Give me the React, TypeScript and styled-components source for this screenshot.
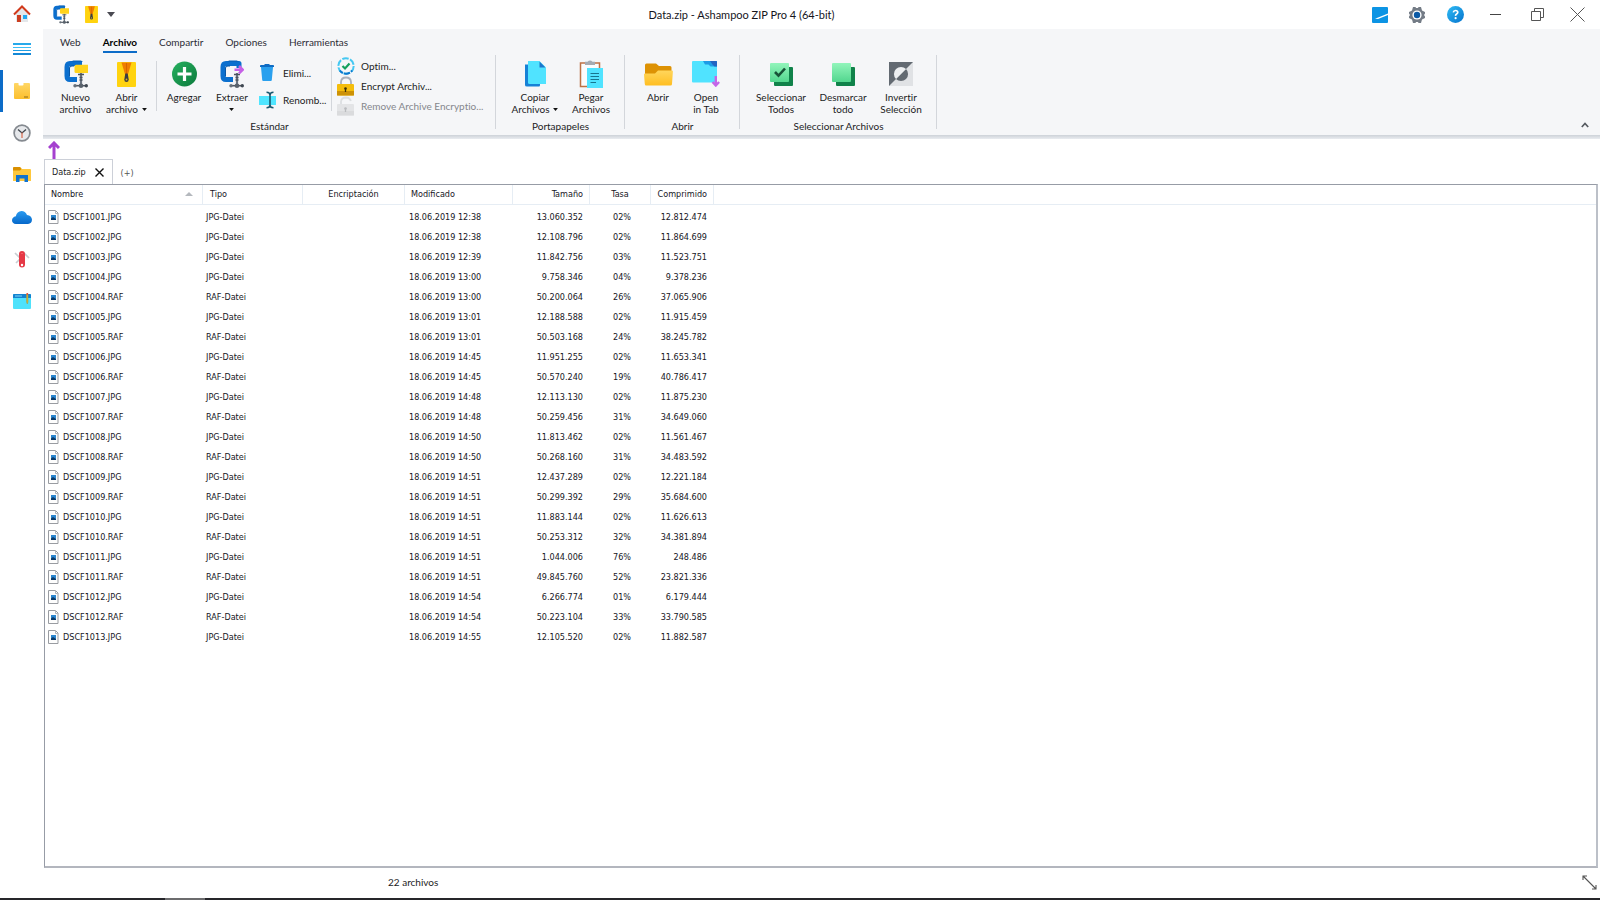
import React from 'react';
import styled, { createGlobalStyle } from 'styled-components';

const uiFont = 'Lato, "Open Sans", sans-serif';
const listFont = '"DejaVu Sans Condensed", "DejaVu Sans", sans-serif';

const GlobalStyle = createGlobalStyle`
  *, *::before, *::after { box-sizing: border-box; }
  body { margin: 0; background: #fff; }
  button { font: inherit; color: inherit; background: none; border: 0; padding: 0; margin: 0; }
  svg { display: block; flex: none; }
`;

const Window = styled.div`
  display: flex;
  flex-direction: column;
  min-height: 100vh;
  background: #fff;
  color: #1c1c24;
  font: 10px/12px ${uiFont};
  font-variant-ligatures: none;
`;

const Body = styled.div`
  flex: 1;
  display: flex;
`;

const Sidebar = styled.nav`
  flex: none;
  width: 43px;
  display: flex;
  flex-direction: column;
`;

const SideButton = styled.button<{ $top?: boolean; $active?: boolean }>`
  height: ${p => (p.$top ? 28 : 42)}px;
  display: flex;
  align-items: center;
  justify-content: center;
  padding-right: 3px;
  border-left: 3px solid ${p => (p.$active ? '#0c6cc8' : 'transparent')};
  background-clip: padding-box;
`;

const Main = styled.main`
  flex: 1;
  min-width: 0;
  display: flex;
  flex-direction: column;
`;

const TitleBar = styled.header`
  height: 29px;
  display: flex;
  align-items: center;
`;

const QuickTools = styled.div`
  display: flex;
  align-items: center;
  gap: 16px;
  padding-left: 10px;
`;

const CaretButton = styled.button`
  margin-left: -7px;
`;

const Title = styled.h1`
  flex: 1;
  margin: 0;
  padding-left: 2px;
  text-align: center;
  font-size: 11px;
  line-height: 14px;
  font-weight: 400;
  color: #15151c;
`;

const WindowControls = styled.div`
  display: grid;
  grid-template-columns: 28px 46px 30px 50px 34px 46px;
  justify-items: center;
  align-items: center;
`;

const Ribbon = styled.section`
  height: 106px;
  background: #f5f6f8;
  display: flex;
  flex-direction: column;
`;

const RibbonEdge = styled.div`
  height: 4px;
  background: linear-gradient(#cdd2d8, #e9ecf0);
`;

const Tabs = styled.div`
  height: 25px;
  display: flex;
  gap: 22px;
  padding-left: 17px;
`;

const Tab = styled.button<{ $active?: boolean }>`
  height: 24px;
  padding-top: 3px;
  font-weight: ${p => (p.$active ? 700 : 400)};
  color: ${p => (p.$active ? '#000' : '#2c2c36')};
  border-bottom: 2px solid ${p => (p.$active ? '#0c6cc8' : 'transparent')};
`;

const Groups = styled.div`
  flex: 1;
  display: flex;
  align-items: flex-start;
  padding-top: 1px;
`;

const GroupBox = styled.section`
  height: 80px;
  display: flex;
  flex-direction: column;
  background: linear-gradient(#d3d6db, #d3d6db) right top / 1px 74px no-repeat;
`;

const Tools = styled.div<{ $pad: string }>`
  height: 65px;
  padding: ${p => p.$pad};
  display: flex;
`;

const GroupLabel = styled.h2`
  margin: 0;
  text-align: center;
  font-size: 10px;
  line-height: 12px;
  font-weight: 400;
`;

const BigButton = styled.button<{ $width: number }>`
  width: ${p => p.$width}px;
  padding-top: 5px;
  display: flex;
  flex-direction: column;
  align-items: center;
  gap: 3px;
  white-space: nowrap;
`;

const IconSlot = styled.span`
  height: 28px;
  display: flex;
  align-items: center;
`;

const Lines = styled.span`
  display: flex;
  flex-direction: column;
  align-items: center;
`;

const Line = styled.span`
  height: 12px;
  display: flex;
  align-items: center;
  gap: 4px;
`;

const Separator = styled.div`
  width: 1px;
  height: 50px;
  margin: 6px 2px 0 4px;
  background: #d3d6db;
`;

const SmallTools = styled.div<{ $wide?: boolean }>`
  width: ${p => (p.$wide ? 162 : 72)}px;
  padding: ${p => (p.$wide ? '1px 0 0 3px' : '4px 0 0 4px')};
  display: flex;
  flex-direction: column;
`;

const SmallButton = styled.button<{ $height: number }>`
  height: ${p => p.$height}px;
  display: grid;
  grid-template-columns: 18px 1fr;
  column-gap: 6px;
  align-items: center;
  justify-items: start;
  white-space: nowrap;
  &:disabled { color: #85878c; }
`;

const Collapse = styled.button`
  margin: 67px 11px 0 auto;
`;

const DocumentBar = styled.div`
  height: 45px;
  display: flex;
  flex-direction: column;
  padding: 2px 0 0 1px;
`;

const UpButton = styled.button`
  width: 20px;
  height: 18px;
  display: flex;
  justify-content: center;
`;

const DocumentTabs = styled.div`
  flex: 1;
  display: flex;
  align-items: stretch;
  font: 10px/12px ${listFont};
`;

const DocumentTab = styled.div`
  display: flex;
  align-items: center;
  gap: 9px;
  padding: 0 8px 0 7px;
  border: solid #ccd0d8;
  border-width: 1px 1px 0;
`;

const DocumentName = styled.button`
  font-size: 9px;
`;

const NewTab = styled.button`
  padding: 3px 0 0 8px;
  color: #555;
  font-size: 9px;
`;

const ListPane = styled.div`
  flex: 1;
  margin: 0 2px 0 1px;
  border: 1px solid #979ca6;
  border-right: 2px solid #bcc0c8;
  border-bottom: 2px solid #b3b6be;
`;

const FileTable = styled.table`
  width: 669px;
  table-layout: fixed;
  border-collapse: separate;
  border-spacing: 0;
  font: 9px/12px ${listFont};
  color: #16161e;
`;

const HeadBand = styled.div`
  background: linear-gradient(#e6edf4, #e6edf4) left 19px / 100% 1px no-repeat;
`;

type Align = 'left' | 'right' | 'center';

const HeadCell = styled.th<{ $align?: Align; $pad: string }>`
  height: 20px;
  padding: ${p => p.$pad};
  font-weight: 400;
  text-align: ${p => p.$align ?? 'left'};
  border-right: 1px solid #e6edf4;
`;

const SortHead = styled.button`
  width: 100%;
  display: flex;
  align-items: center;
  justify-content: space-between;
`;

const Rows = styled.tbody`
  &::before { content: ''; display: table-row; height: 2px; }
`;

const Cell = styled.td<{ $align?: Align; $pad: string }>`
  height: 20px;
  padding: ${p => p.$pad};
  text-align: ${p => p.$align ?? 'left'};
  white-space: nowrap;
`;

const FileName = styled.span`
  display: flex;
  align-items: center;
  gap: 4px;
`;

const StatusBar = styled.footer`
  height: 30px;
  display: flex;
  align-items: center;
  justify-content: space-between;
  padding: 0 3px 2px 345px;
`;

const BottomEdge = styled.div`
  height: 2px;
  background: linear-gradient(90deg, #26262a 165px, #6c6c6e 165px 205px, #26262a 205px);
`;

/* ---------- icons ---------- */

const Clamp = ({ w = 24, h = 28, extract = false }) => (
  <svg width={w} height={h} viewBox="0 0 24 28">
    <path d={extract ? 'M19 8V3.500H6Q3 3.500 3 7V16Q3 19.500 6 19.500H13' : 'M18 3.500H6Q3 3.500 3 7V16Q3 19.500 6 19.500H13'} fill="none" stroke="#0b6fce" strokeWidth="5" strokeLinejoin="round" />
    <path d="M7 2L9 .4H17L19 2z" fill="#0a64bd" />
    <path d="M5.500 16.500V8Q5.500 6 8 6H10" fill="none" stroke="#0656a6" strokeWidth="1" />
    <path d="M17 13V26" stroke="#6b7480" strokeWidth="2.200" />
    <path d="M14 14.500H20M15.500 17.500H18.500M15.500 20H18.500" stroke="#4c5560" strokeWidth="1.400" />
    {extract
      ? <path d="M14.500 9.700H21.500M19 6L22.700 9.700L19 13.400" fill="none" stroke="#c661e6" strokeWidth="2.600" />
      : <path d="M10.500 6.500Q10.500 4.800 12 4.800H24V13H12Q10.500 13 10.500 11.500z" fill="#ffd31c" />}
    <path d="M11 25.700H23" stroke="#4f5862" strokeWidth="1.600" />
    <circle cx="11" cy="25.700" r="1.700" fill="#69727c" /><circle cx="17" cy="25.700" r="2.300" fill="#59626c" /><circle cx="22.300" cy="25.700" r="1.700" fill="#3f4852" />
  </svg>
);

const Zipper = ({ w = 19, h = 25 }) => (
  <svg width={w} height={h} viewBox="0 0 19 25">
    <rect width="19" height="25" rx="1" fill="#ffd30f" />
    <path d="M4.500 .5H14.500L10.500 14H8.500z" fill="#ef7d00" />
    <path d="M9.500 1V13" stroke="#d66500" strokeWidth="1" />
    <path d="M8.300 11.500H10.700L11.700 17.500Q11.700 20 9.500 20T7.300 17.500z" fill="#3b3d42" />
    <circle cx="9.500" cy="17.500" r=".9" fill="#d6ad20" />
  </svg>
);

const Home = () => (
  <svg width="18" height="18" viewBox="0 0 18 18">
    <path d="M3 8L9 3L15 8V17H3z" fill="#e4e7ea" />
    <path d="M1 9.500L9 1.500L17 9.500" fill="none" stroke="#d13a1c" strokeWidth="2" />
    <rect x="4" y="10" width="4" height="7" fill="#cc3e20" /><rect x="10" y="10" width="4" height="4" fill="#22a7f0" />
  </svg>
);

const Menu = () => (
  <svg width="18" height="12" viewBox="0 0 18 12">
    <path d="M0 0H18V2H0z" fill="#27a9ea" /><path d="M0 4H18V5H0z" fill="#3dbdf5" /><path d="M0 7H18V8H0z" fill="#1f9de3" /><path d="M0 10H18V12H0z" fill="#1488d6" />
  </svg>
);

const Box = () => (
  <svg width="16" height="16" viewBox="0 0 16 16">
    <defs><linearGradient id="box" x1="0" y1="0" x2="0" y2="1"><stop stopColor="#ffd766" /><stop offset="1" stopColor="#fcbf2d" /></linearGradient></defs>
    <path d="M1 0H4.500V1.500Q4.500 2.500 5.500 2.500H8.500Q9.500 2.500 9.500 1.500V0H15Q16 0 16 1V15Q16 16 15 16H1Q0 16 0 15V1Q0 0 1 0z" fill="url(#box)" />
    <path d="M10 14H14" stroke="#8a6a1e" strokeWidth="1" />
  </svg>
);

const Clock = () => (
  <svg width="18" height="18" viewBox="0 0 18 18">
    <circle cx="9" cy="9" r="7.900" fill="#e6e8eb" stroke="#858a90" strokeWidth="1.700" />
    <path d="M5 5.500L9 9L13 5.500" fill="none" stroke="#3e444b" strokeWidth="1.300" /><path d="M9 8.500V14" stroke="#d9694c" strokeWidth="1.200" />
  </svg>
);

const Explorer = () => (
  <svg width="18" height="16" viewBox="0 0 18 16">
    <path d="M0 2Q0 0 1.500 0H7L9 2H17Q18 2 18 3V14H0z" fill="#ffc83d" /><path d="M0 1Q0 0 1 0H7L8.500 2L7 3.500H0z" fill="#d98f00" />
    <path d="M3 8H15V15H11.500V11.500H6.500V15H3z" fill="#1173cf" />
  </svg>
);

const Cloud = () => (
  <svg width="20" height="13" viewBox="0 0 20 13">
    <defs><linearGradient id="cloud" x1="0" y1="0" x2="0" y2="1"><stop stopColor="#2a9bf0" /><stop offset="1" stopColor="#0668ca" /></linearGradient></defs>
    <path d="M4 13Q0 12.500 0 9.200Q.2 6 3.800 5.200Q5 .3 9.500 .1Q13.300 .1 15 4Q19.800 4.500 20 8.800Q19.800 12.700 16 13z" fill="url(#cloud)" />
  </svg>
);

const Knife = () => (
  <svg width="18" height="18" viewBox="0 0 18 18">
    <path d="M2 3L8 9M16 8L11 3M3 13L8 8" stroke="#c9cdd2" strokeWidth="1.700" />
    <rect x="6" y="1" width="6" height="16.500" rx="3" fill="#e63946" /><circle cx="9" cy="15" r="1.200" fill="#fff" /><circle cx="9" cy="3.500" r=".6" fill="#ff8d93" />
  </svg>
);

const Note = () => (
  <svg width="18" height="16" viewBox="0 0 18 16">
    <rect y="1" width="18" height="15" rx="1" fill="#4fe2fb" /><path d="M0 1.500Q0 1 1 1H17Q18 1 18 2V5H0z" fill="#1383d0" /><path d="M2 3H9" stroke="#7fd6f5" strokeWidth="1" />
    <path d="M13.500 1V9L14.300 11L15 9V1z" fill="#e5b320" stroke="#9a9a50" strokeWidth=".5" /><path d="M14.300 0V2" stroke="#e4573d" strokeWidth="1.600" />
  </svg>
);

const CaretDown = ({ w = 8, h = 5, color = '#4a4a52' }) => (
  <svg width={w} height={h} viewBox="0 0 8 5"><path d="M0 0H8L4 5z" fill={color} /></svg>
);
const SmallCaret = () => <CaretDown w={5} h={3} color="#111" />;

const Panel = () => (
  <svg width="16" height="16" viewBox="0 0 16 16"><rect width="16" height="16" rx="1" fill="#0c94e4" /><path d="M3 11.700L16 6.500V8L6 12z" fill="#fff" /></svg>
);

const Gear = () => (
  <svg width="18" height="18" viewBox="0 0 18 18">
    <path d="M5 1H7.500L8 2H10L10.500 1H13L14 4.500L17 6V7.500L16 9L17 10.500V12L14 13.500L13 17H10.500L10 16H8L7.500 17H5L4 13.500L1 12V10.500L2 9L1 7.500V6L4 4.500z" fill="#747c86" />
    <circle cx="9" cy="9" r="4.600" fill="#fff" /><circle cx="9" cy="9" r="3.200" fill="#0b5aa6" />
  </svg>
);

const Help = () => (
  <svg width="17" height="17" viewBox="0 0 17 17">
    <defs><linearGradient id="help" x1="0" y1="0" x2="1" y2="1"><stop stopColor="#2fbcf5" /><stop offset="1" stopColor="#0673cd" /></linearGradient></defs>
    <circle cx="8.500" cy="8.500" r="8.500" fill="url(#help)" />
    <path d="M6.300 6.300Q6.600 4.500 8.600 4.500T10.800 6.300Q10.800 7.300 9.600 8T8.600 9.800" fill="none" stroke="#fff" strokeWidth="1.700" /><circle cx="8.600" cy="12.200" r="1.100" fill="#fff" />
  </svg>
);

const Minimize = () => <svg width="11" height="13" viewBox="0 0 11 13"><path d="M0 6.500H11" stroke="#444" /></svg>;
const Restore = () => <svg width="13" height="13" viewBox="0 0 13 13"><path d="M.5 3.500H9.500V12.500H.5zM3.500 3V.5H12.500V9.500H10" fill="none" stroke="#555" /></svg>;
const Close = () => <svg width="15" height="15" viewBox="0 0 15 15"><path d="M.5 .5L14.500 14.500M14.500 .5L.5 14.500" stroke="#555" strokeWidth="1" /></svg>;

const Add = () => (
  <svg width="25" height="26" viewBox="0 0 25 26">
    <defs><linearGradient id="add" x1="0" y1="0" x2="1" y2="1"><stop stopColor="#27b160" /><stop offset="1" stopColor="#0b7a3c" /></linearGradient></defs>
    <circle cx="12.500" cy="13" r="12.500" fill="url(#add)" /><path d="M12.500 6V20M5.500 13H19.500" stroke="#fff" strokeWidth="3.200" />
  </svg>
);

const Trash = () => (
  <svg width="16" height="17" viewBox="-1 0 16 17"><path d="M1 3H13L11.800 16Q11.700 17 10.800 17H3.200Q2.300 17 2.200 16z" fill="#2aa0ee" /><path d="M0 1.700Q0 1 1 1H4L5 0H9L10 1H13Q14 1 14 1.700V3H0z" fill="#0f6cc4" /></svg>
);

const Rename = () => (
  <svg width="18" height="18" viewBox="0 0 18 18"><rect y="5" width="17" height="9" fill="#4fe5ff" /><path d="M7.500 1.200Q11 1.200 11 4Q11 1.200 14.500 1.200M11 3V15M7.500 16.800Q11 16.800 11 14Q11 16.800 14.500 16.800" fill="none" stroke="#17566e" strokeWidth="1.600" /></svg>
);

const Optimize = () => (
  <svg width="18" height="18" viewBox="0 0 18 18">
    <circle cx="9" cy="9" r="7.700" fill="none" stroke="#45c8f2" strokeWidth="2" strokeDasharray="6.500 1.560" /><path d="M2.800 13.500A7.700 7.700 0 0 0 15.200 13.500" fill="none" stroke="#0b78cf" strokeWidth="2" strokeDasharray="4 1.200 6 1.200 4" />
    <path d="M5.500 9L8 11.500L12.500 6.500" fill="none" stroke="#14a05c" strokeWidth="2.200" />
  </svg>
);

const Lock = ({ open = false }) => (
  <svg width="18" height="20" viewBox="0 0 18 20">
    <path d={open ? 'M4 8V5.500Q4.500 1.500 9 1.500Q13 1.700 13.800 5' : 'M4 9V6Q4.300 1.500 9 1.500T14 6V9'} fill="none" stroke={open ? '#dcdee0' : '#a9b0bb'} strokeWidth="1.800" />
    <rect y="8" width="17" height="11.500" rx="1" fill={open ? '#e3e4e6' : '#f4bd0c'} /><rect y="15" width="17" height="4.500" fill={open ? '#dadbdd' : '#cd9206'} />
    <circle cx="8.500" cy="12.500" r="1.300" fill={open ? '#b9bbbe' : '#3d3108'} /><path d="M8.500 12.500V16" stroke={open ? '#b9bbbe' : '#3d3108'} strokeWidth="1.300" />
  </svg>
);

const Copy = () => (
  <svg width="21" height="26" viewBox="0 0 21 26"><path d="M0 3.500H15V24Q15 25.500 14 25.500H2Q0 25.500 0 24z" fill="#1681d6" /><path d="M3 0H14.500L21 6.500V23H4.500Q3 23 3 21.500z" fill="#50e3ff" /><path d="M14.500 .5V6.500H20.500z" fill="#1d76cc" /></svg>
);

const Paste = () => (
  <svg width="24" height="28" viewBox="0 0 24 28"><rect x="1.500" y="3" width="19" height="23.500" fill="#fbfcfd" stroke="#bd7245" strokeWidth="1.500" /><path d="M6 1.800H8.500Q11 -1 13.500 1.800H16V5H6z" fill="#a5abb3" />
    <path d="M8 8H24V28H8z" fill="#50e3ff" /><path d="M11.500 13.500H20M11.500 16.500H20M11.500 19.500H20M11.500 22.500H17" stroke="#17768f" strokeWidth="1.200" /></svg>
);

const Folder = () => (
  <svg width="29" height="23" viewBox="0 0 29 23">
    <defs><linearGradient id="fold" x1="0" y1="0" x2="0" y2="1"><stop stopColor="#ffd65c" /><stop offset="1" stopColor="#ffbe22" /></linearGradient></defs>
    <path d="M1 2Q1 .5 2.500 .5H12L15 3H26Q27.500 3 27.500 4.500V20H1z" fill="#dd9204" /><path d="M0 11.500Q0 10.500 1 10.500H11L14 7.500H28Q29 7.500 28.900 8.500L28 21Q28 22.500 26.500 22.500H2Q1 22.500 .8 21z" fill="url(#fold)" />
  </svg>
);

const OpenTab = () => (
  <svg width="28" height="26" viewBox="0 0 28 26"><rect y="0" width="25" height="21.500" rx="1" fill="#50e3ff" /><path d="M11 0H24Q25 0 25 1V5.500H18.500L16.500 3.500H13z" fill="#1c9be6" /><path d="M18 0H24Q25 0 25 1V5.500H22.500L20.500 3.500z" fill="#2265c2" />
    <path d="M23.800 15V24M20.500 21L23.800 24.500L27.100 21" fill="none" stroke="#c465e8" strokeWidth="2.400" /></svg>
);

const Squares = ({ check = false }) => (
  <svg width="23" height="23" viewBox="0 0 23 23">
    <defs><linearGradient id="sq" x1="0" y1="0" x2="0" y2="1"><stop stopColor="#92f5bb" /><stop offset="1" stopColor="#52d68e" /></linearGradient></defs>
    <rect x="4" y="4" width="19" height="19" rx="1" fill="#10824a" /><rect width="19" height="19" rx="1" fill="url(#sq)" />
    {check && <path d="M5 9L8.500 12.700L15 5.500" fill="none" stroke="#175338" strokeWidth="2.600" />}
  </svg>
);

const Invert = () => (
  <svg width="24" height="24" viewBox="0 0 24 24">
    <rect width="24" height="24" fill="#e0e2e5" /><path d="M0 0H24L0 24z" fill="#636a72" />
    <path d="M17 7A7 7 0 0 1 7 17z" fill="#636a72" /><path d="M7 17A7 7 0 0 1 17 7z" fill="#edeff1" />
  </svg>
);

const FileIcon = () => (
  <svg width="11" height="14" viewBox="0 0 11 14"><path d="M.5 .5H7.500L10 3V13.500H.5z" fill="#fdfdfd" stroke="#999ca1" /><path d="M7.500 .5V3.500H10" fill="none" stroke="#b4b7bc" /><rect x="3" y="5" width="5" height="5" fill="#2a86cf" /><path d="M3 10V8.500L5 7L8 9V10z" fill="#0c3a68" /></svg>
);

const UpArrow = () => <svg width="12" height="18" viewBox="0 0 12 18"><path d="M6 18V2M1 7L6 2L11 7" fill="none" stroke="#a541cf" strokeWidth="3" /></svg>;
const TabClose = () => <svg width="9" height="9" viewBox="0 0 9 9"><path d="M.5 .5L8.500 8.500M8.500 .5L.5 8.500" stroke="#111" strokeWidth="1.400" /></svg>;
const ChevronUp = () => <svg width="8" height="6" viewBox="0 0 8 6"><path d="M.8 5L4 1.500L7.200 5" fill="none" stroke="#555a60" strokeWidth="1.700" /></svg>;
const SortMark = () => <svg width="8" height="4" viewBox="0 0 8 4"><path d="M0 4L4 0L8 4z" fill="#b4b8bd" /></svg>;
const Grip = () => <svg width="15" height="15" viewBox="0 0 15 15"><path d="M1 1L14 14M1 5V1H5M10 14H14V10" fill="none" stroke="#555" strokeWidth="1.100" /></svg>;

/* ---------- data ---------- */

type FileRow = [string, string, string, string, string];

const files: FileRow[] = [
  ['DSCF1001.JPG', '12:38', '13.060.352', '02%', '12.812.474'],
  ['DSCF1002.JPG', '12:38', '12.108.796', '02%', '11.864.699'],
  ['DSCF1003.JPG', '12:39', '11.842.756', '03%', '11.523.751'],
  ['DSCF1004.JPG', '13:00', '9.758.346', '04%', '9.378.236'],
  ['DSCF1004.RAF', '13:00', '50.200.064', '26%', '37.065.906'],
  ['DSCF1005.JPG', '13:01', '12.188.588', '02%', '11.915.459'],
  ['DSCF1005.RAF', '13:01', '50.503.168', '24%', '38.245.782'],
  ['DSCF1006.JPG', '14:45', '11.951.255', '02%', '11.653.341'],
  ['DSCF1006.RAF', '14:45', '50.570.240', '19%', '40.786.417'],
  ['DSCF1007.JPG', '14:48', '12.113.130', '02%', '11.875.230'],
  ['DSCF1007.RAF', '14:48', '50.259.456', '31%', '34.649.060'],
  ['DSCF1008.JPG', '14:50', '11.813.462', '02%', '11.561.467'],
  ['DSCF1008.RAF', '14:50', '50.268.160', '31%', '34.483.592'],
  ['DSCF1009.JPG', '14:51', '12.437.289', '02%', '12.221.184'],
  ['DSCF1009.RAF', '14:51', '50.299.392', '29%', '35.684.600'],
  ['DSCF1010.JPG', '14:51', '11.883.144', '02%', '11.626.613'],
  ['DSCF1010.RAF', '14:51', '50.253.312', '32%', '34.381.894'],
  ['DSCF1011.JPG', '14:51', '1.044.006', '76%', '248.486'],
  ['DSCF1011.RAF', '14:51', '49.845.760', '52%', '23.821.336'],
  ['DSCF1012.JPG', '14:54', '6.266.774', '01%', '6.179.444'],
  ['DSCF1012.RAF', '14:54', '50.223.104', '33%', '33.790.585'],
  ['DSCF1013.JPG', '14:55', '12.105.520', '02%', '11.882.587'],
];

const columnWidths = [158, 100, 102, 108, 77, 61, 63];

interface ToolProps {
  icon: React.ReactNode;
  lines: string[];
  width: number;
  menu?: 'inline' | 'below';
}

const Tool = ({ icon, lines, width, menu }: ToolProps) => (
  <BigButton type="button" $width={width}>
    <IconSlot>{icon}</IconSlot>
    <Lines>
      {lines.map((text, i) => (
        <Line key={text}>
          {text}
          {menu === 'inline' && i === lines.length - 1 && <SmallCaret />}
        </Line>
      ))}
      {menu === 'below' && <Line><SmallCaret /></Line>}
    </Lines>
  </BigButton>
);

interface GroupProps {
  label: string;
  pad: string;
  children: React.ReactNode;
}

const Group = ({ label, pad, children }: GroupProps) => (
  <GroupBox>
    <Tools $pad={pad}>{children}</Tools>
    <GroupLabel>{label}</GroupLabel>
  </GroupBox>
);

const tabs = ['Web', 'Archivo', 'Compartir', 'Opciones', 'Herramientas'];

export default function App() {
  return (
    <Window>
      <GlobalStyle />
      <Body>
        <Sidebar aria-label="Principal">
          <SideButton type="button" $top aria-label="Inicio"><Home /></SideButton>
          <SideButton type="button" aria-label="Menú"><Menu /></SideButton>
          <SideButton type="button" $active aria-label="Archivo"><Box /></SideButton>
          <SideButton type="button" aria-label="Recientes"><Clock /></SideButton>
          <SideButton type="button" aria-label="Explorador"><Explorer /></SideButton>
          <SideButton type="button" aria-label="Nube"><Cloud /></SideButton>
          <SideButton type="button" aria-label="Utilidades"><Knife /></SideButton>
          <SideButton type="button" aria-label="Notas"><Note /></SideButton>
        </Sidebar>
        <Main>
          <TitleBar>
            <QuickTools>
              <button type="button" aria-label="Nuevo archivo"><Clamp w={16} h={19} /></button>
              <button type="button" aria-label="Abrir archivo"><Zipper w={13} h={17} /></button>
              <CaretButton type="button" aria-label="Personalizar"><CaretDown /></CaretButton>
            </QuickTools>
            <Title>Data.zip - Ashampoo ZIP Pro 4 (64-bit)</Title>
            <WindowControls>
              <button type="button" aria-label="Apariencia"><Panel /></button>
              <button type="button" aria-label="Configuración"><Gear /></button>
              <button type="button" aria-label="Ayuda"><Help /></button>
              <button type="button" aria-label="Minimizar"><Minimize /></button>
              <button type="button" aria-label="Restaurar"><Restore /></button>
              <button type="button" aria-label="Cerrar"><Close /></button>
            </WindowControls>
          </TitleBar>

          <Ribbon>
            <Tabs role="tablist">
              {tabs.map(name => (
                <Tab key={name} type="button" role="tab" aria-selected={name === 'Archivo'} $active={name === 'Archivo'}>{name}</Tab>
              ))}
            </Tabs>
            <Groups>
              <Group label="Estándar" pad="0 0 0 7px">
                <Tool icon={<Clamp />} lines={['Nuevo', 'archivo']} width={51} />
                <Tool icon={<Zipper />} lines={['Abrir', 'archivo']} width={51} menu="inline" />
                <Separator />
                <Tool icon={<Add />} lines={['Agregar']} width={50} />
                <Tool icon={<Clamp extract />} lines={['Extraer']} width={46} menu="below" />
                <SmallTools>
                  <SmallButton type="button" $height={27}><Trash />Elimi...</SmallButton>
                  <SmallButton type="button" $height={27}><Rename />Renomb...</SmallButton>
                </SmallTools>
                <Separator />
                <SmallTools $wide>
                  <SmallButton type="button" $height={20}><Optimize />Optim...</SmallButton>
                  <SmallButton type="button" $height={20}><Lock />Encrypt Archiv...</SmallButton>
                  <SmallButton type="button" $height={20} disabled><Lock open />Remove Archive Encryptio...</SmallButton>
                </SmallTools>
              </Group>
              <Group label="Portapapeles" pad="0 6px 0 11px">
                <Tool icon={<Copy />} lines={['Copiar', 'Archivos']} width={56} menu="inline" />
                <Tool icon={<Paste />} lines={['Pegar', 'Archivos']} width={56} />
              </Group>
              <Group label="Abrir" pad="0 10px 0 9px">
                <Tool icon={<Folder />} lines={['Abrir']} width={48} />
                <Tool icon={<OpenTab />} lines={['Open', 'in Tab']} width={48} />
              </Group>
              <Group label="Seleccionar Archivos" pad="0 9px 0 10px">
                <Tool icon={<Squares check />} lines={['Seleccionar', 'Todos']} width={62} />
                <Tool icon={<Squares />} lines={['Desmarcar', 'todo']} width={62} />
                <Tool icon={<Invert />} lines={['Invertir', 'Selección']} width={54} />
              </Group>
              <Collapse type="button" aria-label="Contraer cinta"><ChevronUp /></Collapse>
            </Groups>
          </Ribbon>
          <RibbonEdge />

          <DocumentBar>
            <UpButton type="button" aria-label="Subir un nivel"><UpArrow /></UpButton>
            <DocumentTabs>
              <DocumentTab>
                <DocumentName type="button">Data.zip</DocumentName>
                <button type="button" aria-label="Cerrar pestaña"><TabClose /></button>
              </DocumentTab>
              <NewTab type="button">(+)</NewTab>
            </DocumentTabs>
          </DocumentBar>

          <ListPane>
            <HeadBand>
              <FileTable>
                <colgroup>{columnWidths.map((w, i) => <col key={i} width={w} />)}</colgroup>
                <thead>
                  <tr>
                    <HeadCell scope="col" $pad="0 9px 2px 6px"><SortHead type="button">Nombre<SortMark /></SortHead></HeadCell>
                    <HeadCell scope="col" $pad="0 0 2px 7px">Tipo</HeadCell>
                    <HeadCell scope="col" $align="center" $pad="0 0 2px">Encriptación</HeadCell>
                    <HeadCell scope="col" $pad="0 0 2px 6px">Modificado</HeadCell>
                    <HeadCell scope="col" $align="right" $pad="0 6px 2px 0">Tamaño</HeadCell>
                    <HeadCell scope="col" $align="center" $pad="0 0 2px">Tasa</HeadCell>
                    <HeadCell scope="col" $align="right" $pad="0 6px 2px 0">Comprimido</HeadCell>
                  </tr>
                </thead>
                <Rows>
                  {files.map(([name, time, size, rate, packed]) => (
                    <tr key={name}>
                      <Cell $pad="0 0 0 3px"><FileName><FileIcon />{name}</FileName></Cell>
                      <Cell $pad="0 0 0 3px">{name.slice(-3)}-Datei</Cell>
                      <Cell $pad="0" />
                      <Cell $pad="0 0 0 4px">18.06.2019 {time}</Cell>
                      <Cell $align="right" $pad="0 7px 0 0">{size}</Cell>
                      <Cell $align="center" $pad="0 0 0 3px">{rate}</Cell>
                      <Cell $align="right" $pad="0 7px 0 0">{packed}</Cell>
                    </tr>
                  ))}
                </Rows>
              </FileTable>
            </HeadBand>
          </ListPane>

          <StatusBar>
            <span>22 archivos</span>
            <Grip />
          </StatusBar>
        </Main>
      </Body>
      <BottomEdge />
    </Window>
  );
}
